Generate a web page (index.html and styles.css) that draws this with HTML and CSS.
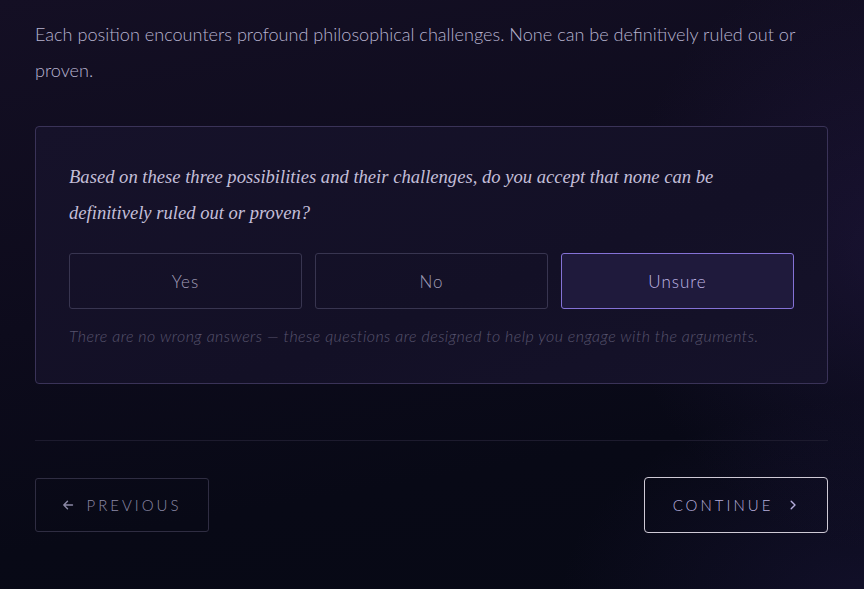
FILE: index.html
```html
<!DOCTYPE html>
<html lang="en">
<head>
<meta charset="utf-8">
<title>Reflection</title>
<link rel="stylesheet" href="styles.css">
</head>
<body>
<main class="page">
  <p class="lead">Each position encounters profound philosophical challenges. None can be definitively ruled out or proven.</p>

  <section class="card">
    <p class="question">Based on these three possibilities and their challenges, do you accept that none can be definitively ruled out or proven?</p>
    <div class="options">
      <button class="option">Yes</button>
      <button class="option">No</button>
      <button class="option option-selected">Unsure</button>
    </div>
    <p class="note">There are no wrong answers — these questions are designed to help you engage with the arguments.</p>
  </section>

  <hr class="divider">

  <nav class="nav">
    <button class="nav-btn nav-prev">
      <svg class="icon" width="12" height="12" viewBox="0 0 12 12" aria-hidden="true"><path d="M10.5 6H1.8M5.5 2.2L1.8 6l3.7 3.8" fill="none" stroke="currentColor" stroke-width="1.4" stroke-linecap="round" stroke-linejoin="round"/></svg>
      <span>Previous</span>
    </button>
    <button class="nav-btn nav-next">
      <span>Continue</span>
      <svg class="icon" width="12" height="12" viewBox="0 0 12 12" aria-hidden="true"><path d="M4.2 2.2L8 6l-3.8 3.8" fill="none" stroke="currentColor" stroke-width="1.4" stroke-linecap="round" stroke-linejoin="round"/></svg>
    </button>
  </nav>
</main>
</body>
</html>
```

FILE: styles.css
```css
html, body {
  margin: 0;
  padding: 0;
  height: 100%;
}

body {
  background:
    radial-gradient(ellipse 260px 300px at 880px 250px, rgba(60, 40, 110, 0.25), rgba(60, 40, 110, 0) 100%),
    radial-gradient(ellipse 300px 200px at 860px 600px, rgba(50, 35, 100, 0.25), rgba(50, 35, 100, 0) 100%),
    linear-gradient(170deg, #140f24 0%, #0d0b1c 45%, #080916 75%, #070915 100%);
  font-family: "Lato", "Open Sans", sans-serif;
  color: #b9b5d0;
  overflow: hidden;
}

.page {
  padding: 16px 36px 0 35px;
}

.lead {
  margin: 0;
  font-size: 18.1px;
  font-weight: 300;
  line-height: 36px;
  color: #b7b3cf;
}

.card {
  margin-top: 38px;
  border: 1px solid #3a3358;
  border-radius: 4px;
  background: linear-gradient(160deg, #16122a 0%, #131026 60%, #15122a 100%);
  padding: 32px 33px 36px 33px;
}

.question {
  margin: 0;
  font-family: "Liberation Serif", "DejaVu Serif", serif;
  font-style: italic;
  font-size: 18.6px;
  line-height: 36px;
  color: #c3bed8;
  max-width: 680px;
}

.options {
  display: grid;
  grid-template-columns: repeat(3, 1fr);
  gap: 13px;
  margin-top: 22px;
}

.option {
  height: 56px;
  background: transparent;
  border: 1px solid #383550;
  border-radius: 3px;
  font-family: "Lato", "Open Sans", sans-serif;
  font-size: 17px;
  font-weight: 300;
  letter-spacing: 1px;
  color: #a09db6;
}

.option-selected {
  border-color: #8472d6;
  background: #1f1a3c;
  color: #bfb7e6;
}

.note {
  margin: 16px 0 0;
  font-size: 16px;
  font-style: italic;
  font-weight: 300;
  letter-spacing: 0.45px;
  line-height: 22px;
  color: #57536d;
}

.divider {
  margin: 56px 0 0;
  border: 0;
  height: 1px;
  background: #1d1b2e;
}

.nav {
  display: flex;
  justify-content: space-between;
  align-items: center;
  margin-top: 36px;
}

.nav-btn {
  display: inline-flex;
  align-items: center;
  justify-content: center;
  gap: 12px;
  background: transparent;
  border-radius: 3px;
  font-family: "Lato", "Open Sans", sans-serif;
  font-size: 15px;
  font-weight: 300;
  letter-spacing: 3px;
  text-transform: uppercase;
}

.nav-prev {
  width: 174px;
  height: 54px;
  border: 1px solid #2f2d42;
  color: #8c89a6;
}

.nav-next {
  width: 184px;
  height: 56px;
  border: 1.5px solid #cfcad6;
  border-radius: 4px;
  color: #b6aedc;
  gap: 14px;
}

.icon {
  display: block;
  flex: none;
}
```
